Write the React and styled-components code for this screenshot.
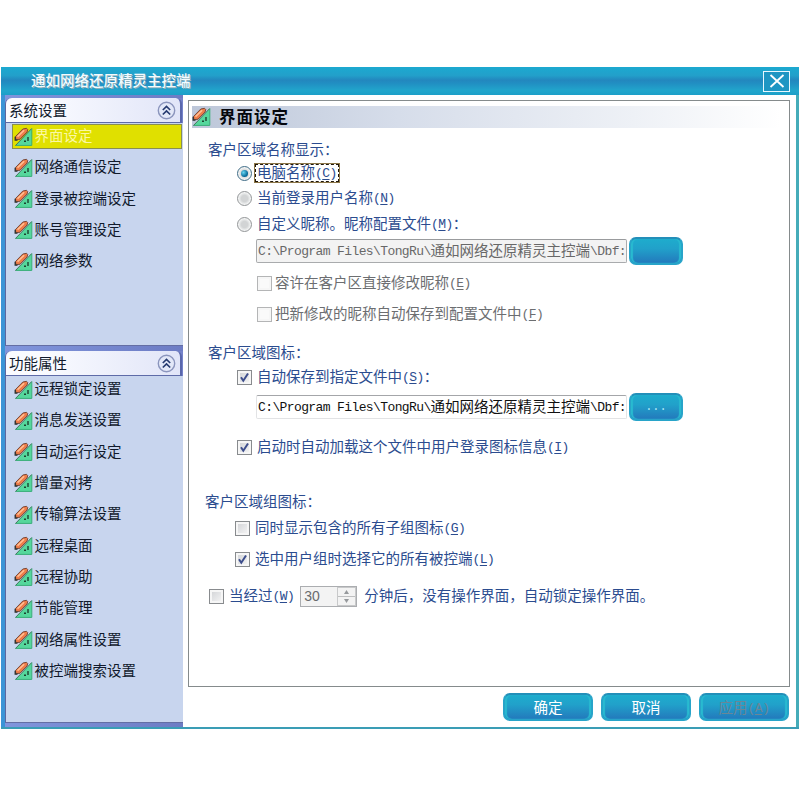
import React from "react";
import styled, { createGlobalStyle, css } from "styled-components";

const Global = createGlobalStyle`
  * { box-sizing: border-box; }
  body { margin: 0; background: #fff; }
`;

const Page = styled.div`
  width: 800px;
  height: 800px;
  padding: 67px 1px 0;
  overflow: hidden;
  background: #fff;
  font: 14.5px/22px "Noto Sans CJK SC", sans-serif;
  color: #111a2c;
`;
const Window = styled.div`
  width: 798px;
  height: 662px;
  display: flex;
  flex-direction: column;
  background: #fff;
  border-bottom: 2px solid #3a9db5;
`;
const TitleBar = styled.header`
  height: 28px;
  flex: none;
  display: flex;
  align-items: center;
  justify-content: space-between;
  padding: 0 9px 0 30px;
  background: linear-gradient(#1ca9d0, #22a0ca 30%, #2387be 47%, #2190c3 60%, #21a6cc 85%, #1c9fc8);
`;
const Title = styled.h1`
  margin: 0;
  padding-bottom: 3px;
  font-size: 14.5px;
  line-height: 22px;
  font-weight: 500;
  color: #f2fbff;
  text-shadow: 1px 1px 0 #8fb0ba;
`;
const CloseButton = styled.button`
  width: 27px;
  height: 21px;
  padding: 0;
  display: flex;
  align-items: center;
  justify-content: center;
  background: #1e96c3;
  border: 1.5px solid #e8f8ff;
`;
const Body = styled.div`
  flex: 1;
  min-height: 0;
  display: flex;
  border-left: 4px solid #3b94d6;
  border-right: 3px solid #45acb9;
`;
const Sidebar = styled.nav`
  width: 178px;
  flex: none;
  display: flex;
  flex-direction: column;
  padding: 3px 0 4px;
  background: linear-gradient(90deg, #8095dc, #6d7cc4);
`;
const Group = styled.section`
  height: ${(p) => p.$height}px;
  margin-bottom: ${(p) => p.$gap || 0}px;
  background: #c8d5ee;
  border-left: 1px solid #5b67a0;
  border-bottom: 1px solid #646ea4;
  border-radius: 6px 6px 0 0;
`;
const HeaderFrame = styled.div`
  padding-right: 1px;
  background: #7583ca;
  border-radius: 6px 0 0 0;
`;
const GroupHeader = styled.div`
  height: 25px;
  display: flex;
  align-items: center;
  justify-content: space-between;
  padding: 0 4px 0 3px;
  border-right: 2px solid #5a67ac;
  border-bottom: 1px solid #5e6ba8;
  background: linear-gradient(90deg, #fafbff 20%, #e1e5f8);
  border-radius: 6px 6px 0 0;
`;
const Items = styled.ul`
  list-style: none;
  margin: 0;
  padding: ${(p) => p.$top}px 1px 0 6px;
`;
const Item = styled.li`
  height: 25px;
  margin-bottom: 6.33px;
  display: flex;
  align-items: center;
  gap: 2px;
  padding-left: 0.5px;
  border: 1px solid transparent;
  ${(p) => p.$active && css`
    background: #e0e000;
    border-color: #898f50;
    color: #fbf8a4;
  `}
`;
const ItemText = styled.span`
  padding-bottom: 3px;
`;
const Main = styled.main`
  flex: 1;
  display: flex;
  flex-direction: column;
  padding: 5px 6px 0 5px;
`;
const Panel = styled.section`
  height: 587px;
  padding: 5px 8px 0 3px;
  border: 1px solid #858b8c;
`;
const PanelHeader = styled.div`
  height: 22px;
  display: flex;
  align-items: center;
  gap: 8px;
  background: linear-gradient(90deg, #bdc7d9, #d6ddea 35%, #eef1f6 75%, #fff);
`;
const PanelTitle = styled.h2`
  margin: 0;
  padding-bottom: 3px;
  font-size: 16.5px;
  line-height: 22px;
  letter-spacing: 1px;
  font-weight: 700;
  color: #05070d;
`;
const Row = styled.div`
  height: 22px;
  margin-top: ${(p) => p.$gap}px;
  padding-left: ${(p) => p.$indent}px;
  display: flex;
  align-items: center;
  white-space: nowrap;
  color: ${(p) => (p.$disabled ? "#6c6e71" : "#2b4c8f")};
`;
const Latin = styled.span`
  font-family: "Liberation Mono", monospace;
  font-size: 13px;
  letter-spacing: -0.55px;
  line-height: 16px;
  vertical-align: 1px;
`;
const PathLatin = styled(Latin)`
  letter-spacing: -0.61px;
`;
const Key = styled(Latin)`
  text-decoration: underline;
  text-underline-offset: 2px;
`;
const Caption = styled.span`
  margin-left: ${(p) => p.$gap ?? 5}px;
  padding-bottom: 3px;
  line-height: 22px;
`;
const GroupCaption = styled.span`
  padding-bottom: 2px;
`;
const FocusCaption = styled.span`
  margin-left: 3px;
  height: 18px;
  padding: 0 1px;
  line-height: 14px;
  border: 1px dashed #1f160a;
  outline: 1px solid #8d7748;
  outline-offset: 0;
`;
const Radio = styled.span`
  width: 15px;
  height: 15px;
  flex: none;
  display: flex;
  align-items: center;
  justify-content: center;
  border-radius: 50%;
  border: 1px solid ${(p) => (p.$on ? "#406d87" : "#929597")};
  background: radial-gradient(#d2d4d5 35%, #f3f4f4 65%);
  &::after {
    content: "";
    width: 7px;
    height: 7px;
    border-radius: 50%;
    background: ${(p) => (p.$on ? "radial-gradient(circle at 35% 35%, #67d5f1, #076a99 65%)" : "transparent")};
  }
`;
const Box = styled.span`
  width: 15px;
  height: 15px;
  flex: none;
  display: flex;
  align-items: center;
  justify-content: center;
  border: 1px solid ${(p) => (p.$disabled ? "#b4b5b6" : "#888b8e")};
  background: ${(p) => (p.$disabled ? "#fafafa" : "linear-gradient(135deg, #cfd1d4, #f8f8f8)")};
  box-shadow: inset 0 0 0 2px #f6f6f6;
`;
const PathField = styled.div`
  width: 371px;
  height: 24px;
  padding-left: 1px;
  line-height: 20px;
  overflow: hidden;
  border: 1px solid ${(p) => (p.$disabled ? "#a9abad" : "#e2e3e5")};
  border-top-color: ${(p) => (p.$disabled ? "#999b9d" : "#a4a6a9")};
  border-radius: 2px;
  background: ${(p) => (p.$disabled ? "#f3f3f3" : "#fff")};
  color: ${(p) => (p.$disabled ? "#686868" : "#101010")};
`;
const GlossButton = styled.button`
  width: 90px;
  height: 28px;
  padding: 0 0 1px;
  border: 2px solid #28a4c9;
  border-top-color: #238fb9;
  border-radius: 7px;
  background: linear-gradient(#1eaccd, #21a1ca 40%, #2379bc);
  box-shadow: inset 2px 0 1px #28bad0, inset -2px 0 1px #28bad0;
  color: ${(p) => (p.$disabled ? "#6a8697" : "#fff")};
  font: 14.5px/21px "Noto Sans CJK SC", sans-serif;
`;
const BrowseButton = styled(GlossButton)`
  margin-left: 2px;
  width: 54px;
  color: #a8e7f5;
  font: 12.08px/24px "Liberation Mono", monospace;
`;
const Spinner = styled.div`
  width: 57px;
  height: 21px;
  margin-left: 6px;
  padding: 0 0 0 3px;
  display: flex;
  align-items: center;
  justify-content: space-between;
  border: 1px solid #abadb0;
  background: #f3f3f3;
  color: #696b6e;
  font: 14px/20px "Liberation Sans", sans-serif;
`;
const Arrows = styled.span`
  width: 19px;
  height: 19px;
  display: grid;
  grid-template-rows: 1fr 1fr;
  border: 1px solid #c8c9ca;
`;
const Arrow = styled.span`
  display: flex;
  align-items: center;
  justify-content: center;
  & + & { border-top: 1px solid #bebfc0; }
`;
const Footer = styled.footer`
  display: flex;
  justify-content: flex-end;
  gap: 8px;
  padding: 6px 1px 0 0;
`;

const ToolIcon = () => (
  <svg width="19" height="20" viewBox="0 0 19 20">
    <path d="M17.7 1.5V18.5H1.5z" fill="#55d79c" />
    <path d="M17.8 1.5V18.4H1.5" fill="none" stroke="#37ad77" />
    <path d="M1.5 18.5 17.6 1.6" fill="none" stroke="#3d6b55" strokeWidth="0.9" />
    <path d="M14 10v4M10 14.3h2" fill="none" stroke="#1c4230" strokeWidth="1.4" />
    <path d="M1.5 9.5 8.8 2l3.7-.7 1.2 1.2-.6 2.5L6 12.2l-4.2.6z" fill="#ee7c4a" stroke="#6b4030" strokeWidth="0.9" />
    <path d="M3.5 9.6 10.2 3.2" stroke="#ffc194" strokeWidth="1.5" />
    <path d="M1.2 9.8v3.3h2.3" fill="none" stroke="#2c302e" strokeWidth="1.3" />
  </svg>
);
const CollapseIcon = () => (
  <svg width="19" height="19" viewBox="0 0 19 19" fill="none">
    <circle cx="9.5" cy="9.5" r="8.2" fill="#e3e8f8" stroke="#8b95bd" strokeWidth="1.4" />
    <path d="m5.8 9 3.7-3.6L13.2 9M5.8 13.5l3.7-3.6 3.7 3.6" stroke="#263b70" strokeWidth="1.7" />
  </svg>
);
const CloseIcon = () => (
  <svg width="16" height="14" viewBox="0 0 16 14">
    <path d="m1.5 1 13 12M14.5 1l-13 12" stroke="#fff" strokeWidth="1.8" />
  </svg>
);
const Tick = () => (
  <svg width="11" height="11" viewBox="0 0 11 11">
    <path d="m2 5.2 2.3 3.5L9 1.5" fill="none" stroke="#3c4d8c" strokeWidth="2" />
  </svg>
);
const Shortcut = ({ k, tail }) => (
  <>
    <Latin>(</Latin><Key>{k}</Key><Latin>)</Latin>{tail}
  </>
);
const Check = ({ on, disabled }) => <Box $disabled={disabled}>{on && <Tick />}</Box>;
const PathText = () => (
  <>
    <PathLatin>C:\Program Files\TongRu\</PathLatin>通如网络还原精灵主控端<PathLatin>\Dbf:</PathLatin>
  </>
);

const system = ["界面设定", "网络通信设定", "登录被控端设定", "账号管理设定", "网络参数"];
const features = [
  "远程锁定设置", "消息发送设置", "自动运行设定", "增量对拷", "传输算法设置",
  "远程桌面", "远程协助", "节能管理", "网络属性设置", "被控端搜索设置",
];

const SideGroup = ({ title, items, active, height, gap, top }) => (
  <Group $height={height} $gap={gap}>
    <HeaderFrame>
      <GroupHeader>{title}<CollapseIcon /></GroupHeader>
    </HeaderFrame>
    <Items $top={top}>
      {items.map((name) => (
        <Item key={name} $active={name === active}><ToolIcon /><ItemText>{name}</ItemText></Item>
      ))}
    </Items>
  </Group>
);

export default function App() {
  return (
    <Page>
      <Global />
      <Window>
        <TitleBar>
          <Title>通如网络还原精灵主控端</Title>
          <CloseButton aria-label="关闭"><CloseIcon /></CloseButton>
        </TitleBar>
        <Body>
          <Sidebar>
            <SideGroup title="系统设置" items={system} active="界面设定" height={248} gap={5} top={1} />
            <SideGroup title="功能属性" items={features} height={372} top={1} />
          </Sidebar>
          <Main>
            <Panel>
              <PanelHeader><ToolIcon /><PanelTitle>界面设定</PanelTitle></PanelHeader>
              <Row $gap={11} $indent={16}><GroupCaption>客户区域名称显示：</GroupCaption></Row>
              <Row $gap={1} $indent={45}>
                <Radio $on /><FocusCaption>电脑名称<Shortcut k="C" /></FocusCaption>
              </Row>
              <Row $gap={3} $indent={45}>
                <Radio /><Caption>当前登录用户名称<Shortcut k="N" /></Caption>
              </Row>
              <Row $gap={4} $indent={45}>
                <Radio /><Caption>自定义昵称。昵称配置文件<Shortcut k="M" tail="：" /></Caption>
              </Row>
              <Row $gap={5} $indent={64}>
                <PathField $disabled><PathText /></PathField><BrowseButton />
              </Row>
              <Row $gap={10} $indent={65} $disabled>
                <Check disabled /><Caption $gap={3}>容许在客户区直接修改昵称<Shortcut k="E" /></Caption>
              </Row>
              <Row $gap={9} $indent={65} $disabled>
                <Check disabled /><Caption $gap={3}>把新修改的昵称自动保存到配置文件中<Shortcut k="F" /></Caption>
              </Row>
              <Row $gap={17} $indent={16}><GroupCaption>客户区域图标：</GroupCaption></Row>
              <Row $gap={2} $indent={45}>
                <Check on /><Caption>自动保存到指定文件中<Shortcut k="S" tail="：" /></Caption>
              </Row>
              <Row $gap={8} $indent={64}>
                <PathField><PathText /></PathField><BrowseButton>...</BrowseButton>
              </Row>
              <Row $gap={18} $indent={45}>
                <Check on /><Caption>启动时自动加载这个文件中用户登录图标信息<Shortcut k="I" /></Caption>
              </Row>
              <Row $gap={33} $indent={13}><GroupCaption>客户区域组图标：</GroupCaption></Row>
              <Row $gap={4} $indent={43}>
                <Check /><Caption>同时显示包含的所有子组图标<Shortcut k="G" /></Caption>
              </Row>
              <Row $gap={9} $indent={43}>
                <Check on /><Caption>选中用户组时选择它的所有被控端<Shortcut k="L" /></Caption>
              </Row>
              <Row $gap={15} $indent={17}>
                <Check /><Caption>当经过<Shortcut k="W" /></Caption>
                <Spinner>
                  30
                  <Arrows>
                    <Arrow><svg width="5" height="4"><path d="M0 4h5L2.5 0z" fill="#96999c" /></svg></Arrow>
                    <Arrow><svg width="5" height="4"><path d="M0 0h5L2.5 4z" fill="#96999c" /></svg></Arrow>
                  </Arrows>
                </Spinner>
                <Caption $gap={7}>分钟后，没有操作界面，自动锁定操作界面。</Caption>
              </Row>
            </Panel>
            <Footer>
              <GlossButton>确定</GlossButton>
              <GlossButton>取消</GlossButton>
              <GlossButton $disabled>应用<Shortcut k="A" /></GlossButton>
            </Footer>
          </Main>
        </Body>
      </Window>
    </Page>
  );
}
